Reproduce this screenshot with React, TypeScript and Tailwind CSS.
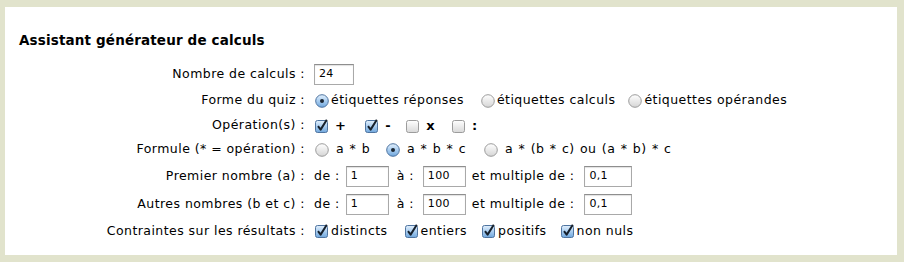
import React from "react";

const CheckOn = () => (
  <svg width="14" height="14" viewBox="0 0 14 14" className="shrink-0">
    <defs>
      <linearGradient id="cbon" x1="0" y1="0" x2="0" y2="1">
        <stop offset="0" stopColor="#e3f0fc" />
        <stop offset="0.5" stopColor="#a9cdf0" />
        <stop offset="1" stopColor="#6fa6dc" />
      </linearGradient>
    </defs>
    <rect x="0.5" y="1.5" width="12" height="12" rx="2" fill="url(#cbon)" stroke="#4f74a0" />
    <path d="M3 7.2 L5.6 10.6 L11.8 0.8" stroke="#16202c" strokeWidth="2" fill="none" strokeLinejoin="round" />
  </svg>
);

const CheckOff = () => (
  <svg width="14" height="14" viewBox="0 0 14 14" className="shrink-0">
    <defs>
      <linearGradient id="cboff" x1="0" y1="0" x2="0" y2="1">
        <stop offset="0" stopColor="#ffffff" />
        <stop offset="1" stopColor="#d8d8d8" />
      </linearGradient>
    </defs>
    <rect x="0.5" y="1.5" width="12" height="12" rx="2" fill="url(#cboff)" stroke="#9c9c9c" />
  </svg>
);

const RadioOn = () => (
  <svg width="14" height="14" viewBox="0 0 14 14" className="shrink-0">
    <defs>
      <linearGradient id="ron" x1="0" y1="0" x2="0" y2="1">
        <stop offset="0" stopColor="#e3f0fc" />
        <stop offset="0.5" stopColor="#a9cdf0" />
        <stop offset="1" stopColor="#6fa6dc" />
      </linearGradient>
    </defs>
    <circle cx="7" cy="7" r="6.3" fill="url(#ron)" stroke="#4f74a0" />
    <circle cx="7" cy="7" r="2" fill="#1b2633" />
  </svg>
);

const RadioOff = () => (
  <svg width="14" height="14" viewBox="0 0 14 14" className="shrink-0">
    <defs>
      <linearGradient id="roff" x1="0" y1="0" x2="0" y2="1">
        <stop offset="0" stopColor="#ffffff" />
        <stop offset="1" stopColor="#d5d5d5" />
      </linearGradient>
    </defs>
    <circle cx="7" cy="7" r="6.3" fill="url(#roff)" stroke="#9c9c9c" />
  </svg>
);

const Input = ({ value, w }: { value: string; w: string }) => (
  <div
    className={`${w} h-[21px] border border-[#a9a9a9] border-t-[#8e8e8e] bg-white flex items-center pl-[4px] text-[11px] tracking-[0.3px] shadow-[inset_0_1px_1px_rgba(0,0,0,0.12)]`}
  >
    {value}
  </div>
);

const Row = ({ label, h, children }: { label: string; h: string; children: React.ReactNode }) => (
  <div className={`flex items-center ${h}`}>
    <div className="w-[300px] shrink-0 text-right whitespace-nowrap">{label}</div>
    <div className="pl-[9px] flex items-center whitespace-nowrap">{children}</div>
  </div>
);

export default function App() {
  return (
    <div
      className="w-[904px] h-[262px] bg-[#e1e3cc] pt-[7px] pl-[5px] text-black"
      style={{ fontFamily: '"DejaVu Sans", Verdana, sans-serif' }}
    >
      <div className="w-[892px] h-[248px] bg-white pt-[25px] text-[12.5px] tracking-[0.45px]">
        <div className="pl-[14px] h-[16px] leading-[16px] text-[13.5px] tracking-[0.15px] font-bold">
          Assistant générateur de calculs
        </div>
        <div className="mt-[13px] flex flex-col">
          <Row label="Nombre de calculs :" h="h-[26px]">
            <Input value="24" w="w-[40px]" />
          </Row>
          <Row label="Forme du quiz :" h="h-[27px]">
            <div className="flex items-center ml-[1px]">
              <RadioOn />
              <span className="ml-[2px]">étiquettes réponses</span>
            </div>
            <div className="flex items-center ml-[17px]">
              <RadioOff />
              <span className="ml-[2px]">étiquettes calculs</span>
            </div>
            <div className="flex items-center ml-[13px]">
              <RadioOff />
              <span className="ml-[2px]">étiquettes opérandes</span>
            </div>
          </Row>
          <Row label="Opération(s) :" h="h-[23px]">
            <div className="flex items-center ml-[1px]">
              <CheckOn />
              <span className="ml-[6px] font-bold text-[13px]">+</span>
            </div>
            <div className="flex items-center ml-[19px]">
              <CheckOn />
              <span className="ml-[6px] font-bold text-[13px]">-</span>
            </div>
            <div className="flex items-center ml-[15px]">
              <CheckOff />
              <span className="ml-[6px] font-bold text-[13px]">x</span>
            </div>
            <div className="flex items-center ml-[17px]">
              <CheckOff />
              <span className="ml-[6px] font-bold text-[13px]">:</span>
            </div>
          </Row>
          <Row label="Formule (* = opération) :" h="h-[25px]">
            <div className="flex items-center ml-[1px] [word-spacing:1px]">
              <RadioOff />
              <span className="ml-[7px]">a * b</span>
            </div>
            <div className="flex items-center ml-[16px] [word-spacing:1px]">
              <RadioOn />
              <span className="ml-[7px]">a * b * c</span>
            </div>
            <div className="flex items-center ml-[18px] [word-spacing:1px]">
              <RadioOff />
              <span className="ml-[7px]">a * (b * c) ou (a * b) * c</span>
            </div>
          </Row>
          <Row label="Premier nombre (a) :" h="h-[28px]">
            <span>de :</span>
            <div className="ml-[6px]"><Input value="1" w="w-[43px]" /></div>
            <span className="ml-[8px]">à :</span>
            <div className="ml-[9px]"><Input value="100" w="w-[43px]" /></div>
            <span className="ml-[6px]">et multiple de :</span>
            <div className="ml-[10px]"><Input value="0,1" w="w-[48px]" /></div>
          </Row>
          <Row label="Autres nombres (b et c) :" h="h-[28px]">
            <span>de :</span>
            <div className="ml-[6px]"><Input value="1" w="w-[43px]" /></div>
            <span className="ml-[8px]">à :</span>
            <div className="ml-[9px]"><Input value="100" w="w-[43px]" /></div>
            <span className="ml-[6px]">et multiple de :</span>
            <div className="ml-[10px]"><Input value="0,1" w="w-[48px]" /></div>
          </Row>
          <Row label="Contraintes sur les résultats :" h="h-[26px]">
            <div className="flex items-center ml-[1px]">
              <CheckOn />
              <span className="ml-[2px]">distincts</span>
            </div>
            <div className="flex items-center ml-[17px]">
              <CheckOn />
              <span className="ml-[2px]">entiers</span>
            </div>
            <div className="flex items-center ml-[15px]">
              <CheckOn />
              <span className="ml-[2px]">positifs</span>
            </div>
            <div className="flex items-center ml-[14px]">
              <CheckOn />
              <span className="ml-[2px]">non nuls</span>
            </div>
          </Row>
        </div>
      </div>
    </div>
  );
}
